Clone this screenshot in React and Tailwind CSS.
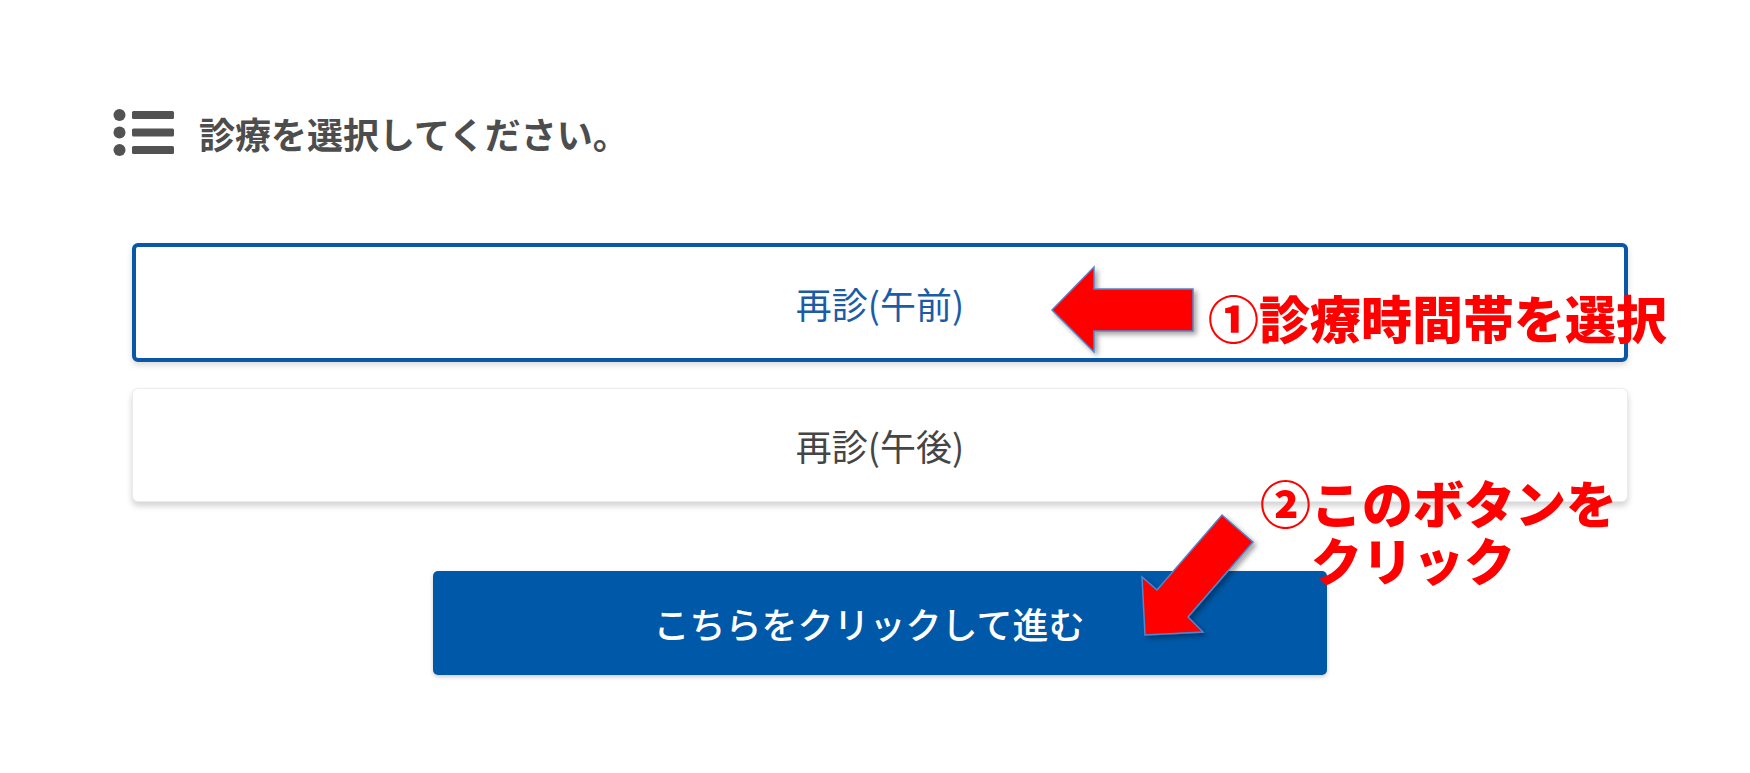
import React from 'react';

const font = { fontFamily: '"Noto Sans CJK JP", "Noto Sans", sans-serif' };

const ListIcon = () => (
  <svg width="61" height="47" viewBox="0 0 61 47" className="shrink-0">
    <circle cx="6.5" cy="6" r="6" fill="#525252" />
    <circle cx="6.5" cy="23.5" r="6" fill="#525252" />
    <circle cx="6.5" cy="41" r="6" fill="#525252" />
    <rect x="19" y="2" width="42" height="8" rx="1.5" fill="#525252" />
    <rect x="19" y="19.5" width="42" height="8" rx="1.5" fill="#525252" />
    <rect x="19" y="37" width="42" height="8" rx="1.5" fill="#525252" />
  </svg>
);

// red callout arrows drawn over the form
const Arrows = () => (
  <svg width="1750" height="773" className="absolute inset-0 pointer-events-none">
    <defs>
      <filter id="arrowShadow" x="-20%" y="-20%" width="140%" height="140%">
        <feDropShadow dx="3" dy="3" stdDeviation="2.5" floodColor="#000" floodOpacity="0.35" />
      </filter>
    </defs>
    <polygon
      points="1052,310 1094,267 1094,289 1193,289 1193,331 1094,331 1094,352"
      fill="#ff0000"
      stroke="#4f86d0"
      strokeWidth="1.5"
      strokeLinejoin="miter"
      filter="url(#arrowShadow)"
    />
    <polygon
      points="1222,515 1253,542 1188,617 1203,632 1145,635 1142,577 1157,590"
      fill="#ff0000"
      stroke="#4f86d0"
      strokeWidth="1.5"
      strokeLinejoin="miter"
      filter="url(#arrowShadow)"
    />
  </svg>
);

export default function App() {
  return (
    <div className="relative w-full h-[773px] bg-white overflow-hidden" style={font}>
      <div className="pt-[109px]">
        <div className="flex items-center gap-[25px] pl-[113px] h-[47px]">
          <ListIcon />
          <h2 className="text-[36px] leading-none font-bold text-[#4d4d4d]">診療を選択してください。</h2>
        </div>

        <div className="mt-[87px] ml-[132px] w-[1496px]">
          <div className="flex flex-col gap-[26px]">
            <button className="h-[119px] w-full rounded-[6px] border-[4px] border-[#0a57a6] bg-white shadow-[0_3px_6px_rgba(0,0,0,0.15)] text-[36px] text-[#1b5ca6]">
              再診(午前)
            </button>
            <button className="h-[114px] w-full rounded-[6px] border border-[#ececec] bg-white shadow-[0_4px_6px_rgba(0,0,0,0.18)] text-[36px] text-[#454545]">
              再診(午後)
            </button>
          </div>

          <div className="mt-[69px] flex justify-center">
            <button className="w-[894px] h-[104px] pr-[22px] rounded-[5px] bg-[#0058a8] shadow-[0_2px_4px_rgba(0,0,0,0.2)] text-white text-[36px] font-medium">
              こちらをクリックして進む
            </button>
          </div>
        </div>
      </div>

      <Arrows />

      <div className="absolute left-[1208px] top-[289px] text-[51px] leading-[57px] font-black text-[#ff0000] whitespace-nowrap">
        ①診療時間帯を選択
      </div>
      <div className="absolute left-[1260px] top-[474px] text-[51px] leading-[57px] font-black text-[#ff0000] whitespace-pre">
        {'②このボタンを\n　クリック'}
      </div>
    </div>
  );
}
